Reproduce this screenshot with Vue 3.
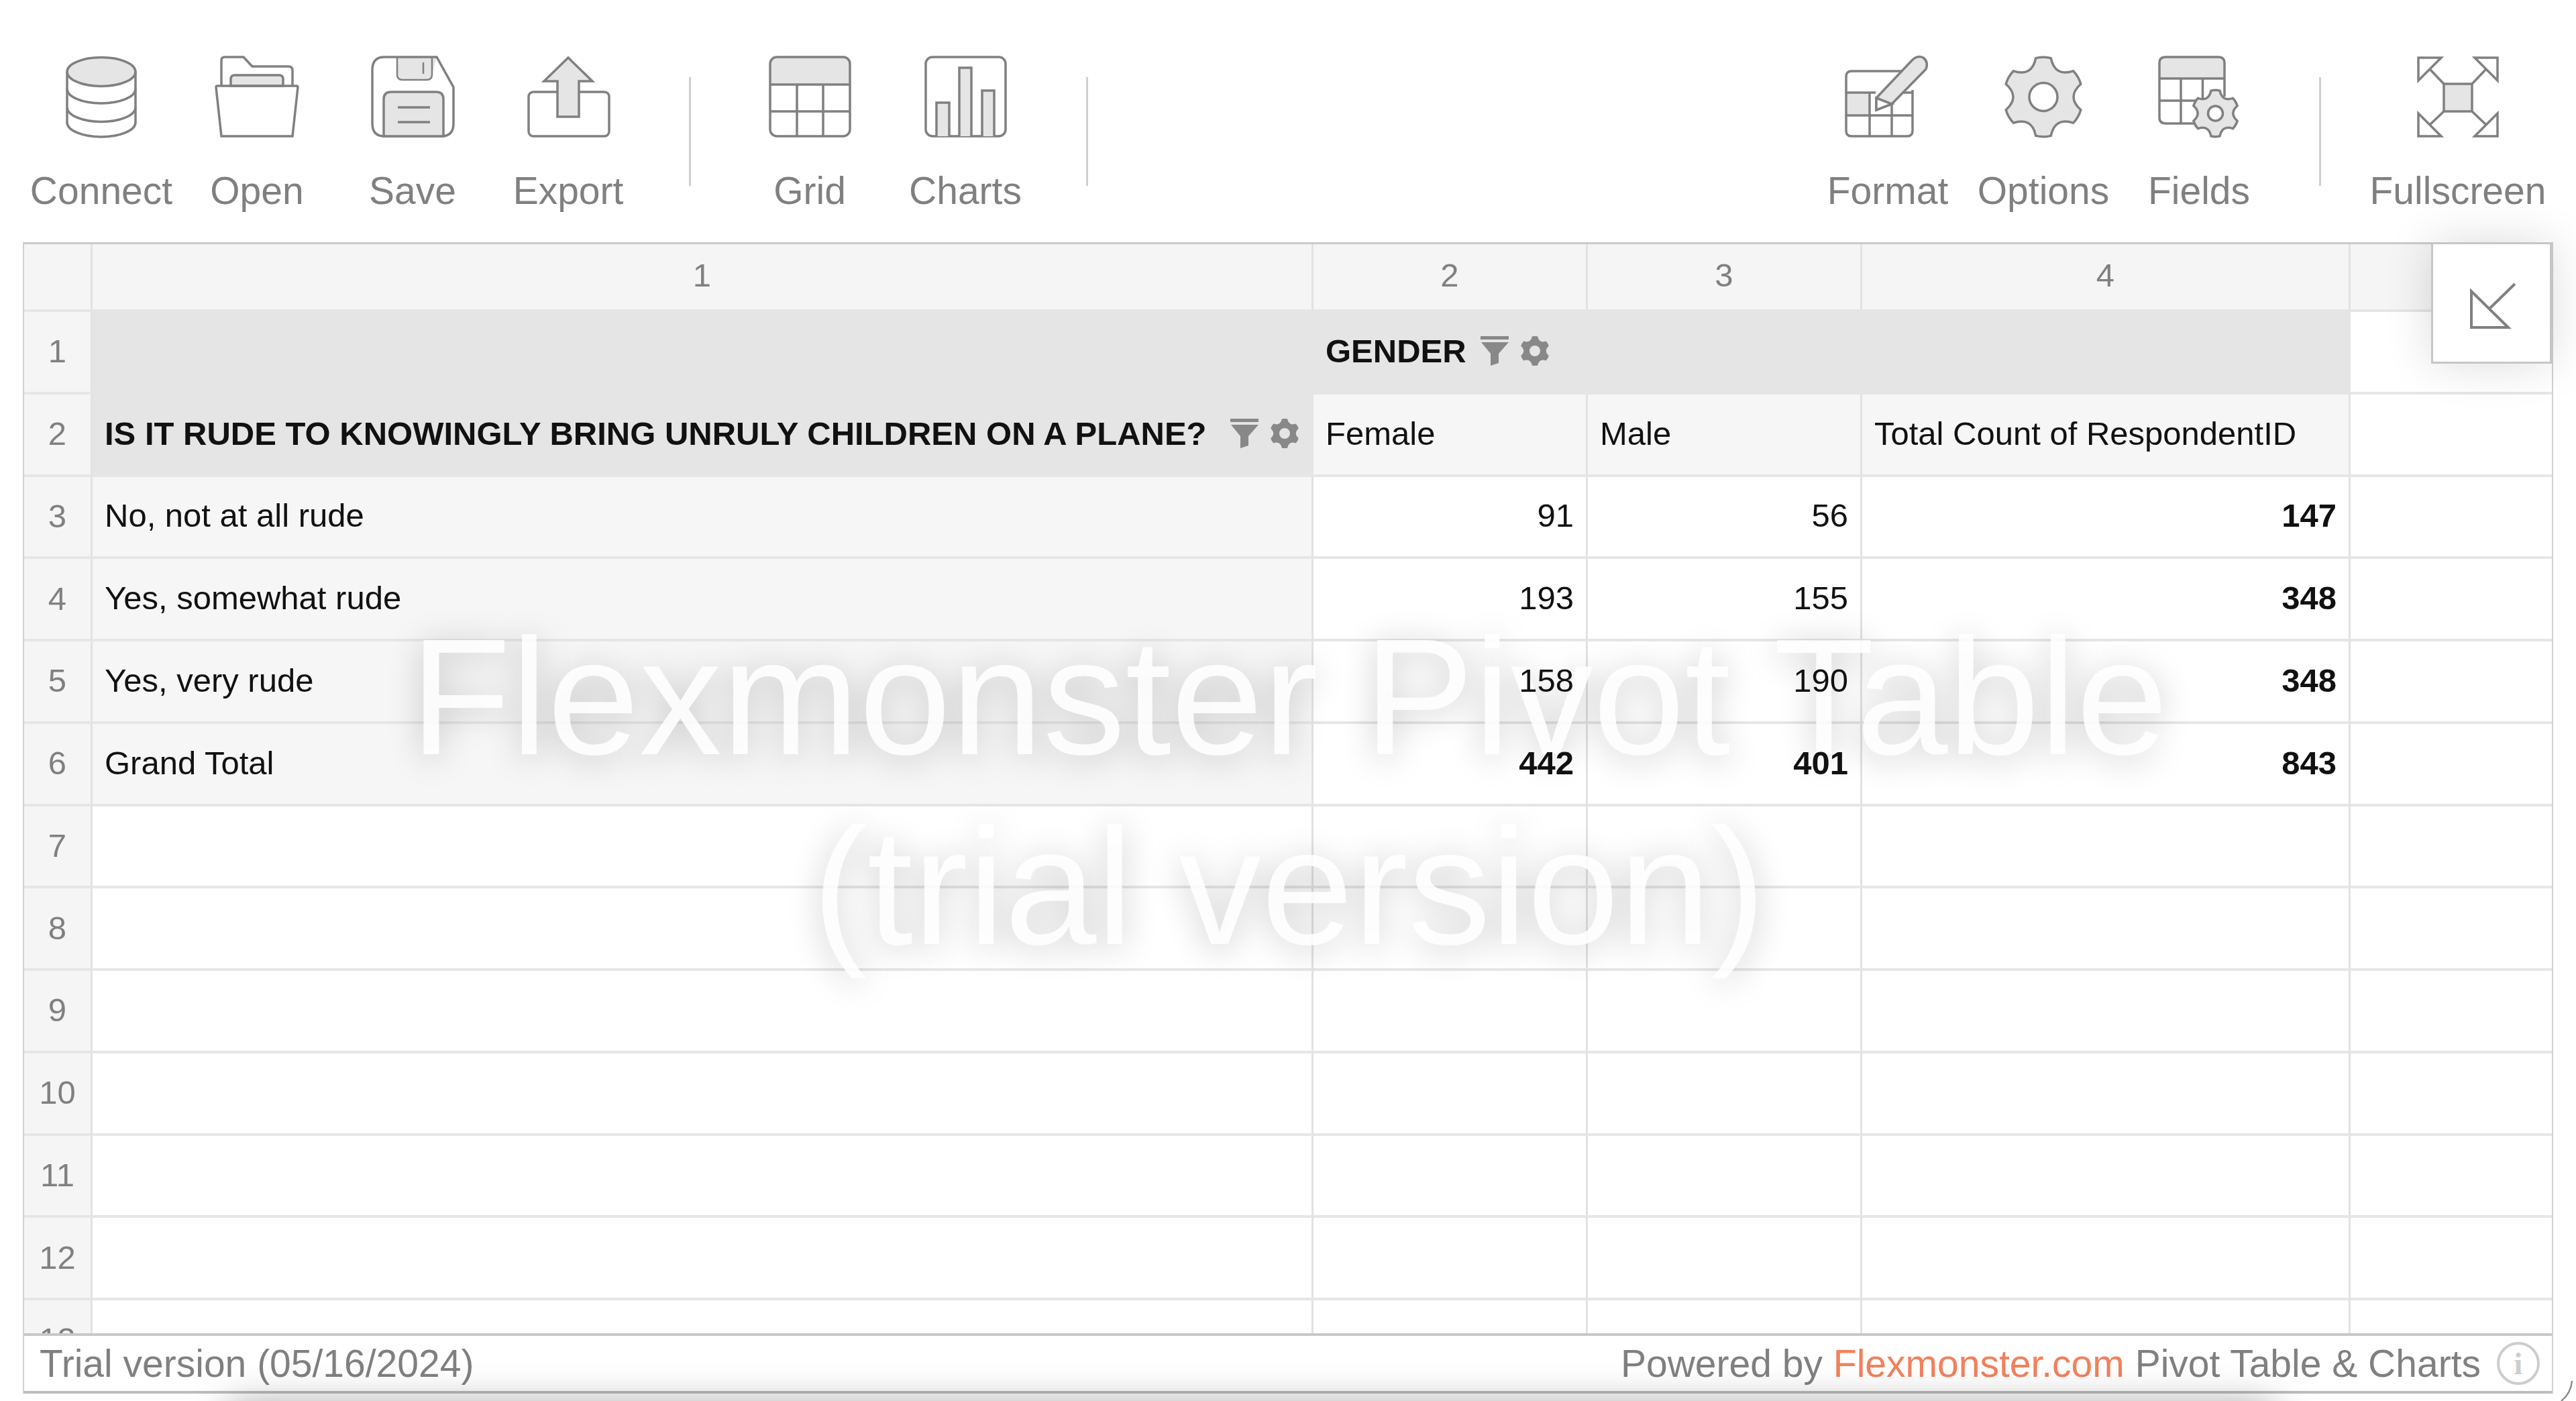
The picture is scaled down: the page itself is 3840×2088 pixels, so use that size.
<template>
  <div class="page">
    <div class="toolbar">
      <div class="tool">
        <svg class="ico" viewBox="0 0 160 121">
          <path class="ln" d="M29 23 V98.5 A51 21.5 0 0 0 131 98.5 V23" />
          <path class="ln" d="M29 48.5 A51 21.5 0 0 0 131 48.5 M29 76 A51 21.5 0 0 0 131 76" />
          <ellipse class="ln fl" cx="80" cy="23" rx="51" ry="21.5" />
        </svg>
        <span>Connect</span>
      </div>
      <div class="tool">
        <svg class="ico" viewBox="0 0 160 121">
          <path class="ln" d="M27 44 V6 Q27 1 32 1 H60 L73 15 H127 Q133 15 133 21 V44" />
          <path class="ln fl" d="M41 44 V34 Q41 28 47 28 H113 Q119 28 119 34 V44 Z" />
          <path class="ln" d="M19 46 Q19 44 21 44 H139 Q141 44 141 46 L133 119 H27 Z" />
        </svg>
        <span>Open</span>
      </div>
      <div class="tool">
        <svg class="ico" viewBox="0 0 160 121">
          <path class="fl" d="M57 2 V27 Q57 35 65 35 H101 Q109 35 109 27 L116 2 Z" />
          <path class="ln thin" d="M57 2 V27 Q57 35 65 35 H101 Q109 35 109 27 V2 M96 9 V26" />
          <path class="ln" d="M20 20 Q20 1 38 1 H116 L141 46 V100 Q141 119 123 119 H38 Q20 119 20 100 Z" />
          <path class="ln fl" d="M37 119 V64 Q37 53 48 53 H115 Q126 53 126 64 V119 Z" />
          <path class="ln" d="M58 76 H106 M58 98 H106" />
        </svg>
        <span>Save</span>
      </div>
      <div class="tool">
        <svg class="ico" viewBox="0 0 160 121">
          <rect class="ln" x="21" y="53" width="120" height="66" rx="7" />
          <path class="ln fl" d="M80 2 L116 37 H96 V90 H64 V37 H44 Z" />
        </svg>
        <span>Export</span>
      </div>
      <div class="sep"></div>
      <div class="tool">
        <svg class="ico" viewBox="0 0 160 121">
          <path class="fl" d="M21 42 V10 Q21 1 30 1 H131 Q140 1 140 10 V42 Z" />
          <rect class="ln" x="21" y="1" width="119" height="118" rx="10" />
          <path class="ln" d="M21 42 H140 M21 82 H140 M61 42 V119 M100 42 V119" />
        </svg>
        <span>Grid</span>
      </div>
      <div class="tool">
        <svg class="ico" viewBox="0 0 160 121">
          <rect class="ln" x="21" y="1" width="119" height="118" rx="10" />
          <path class="ln fl" d="M37 119 V69 H56 V119 M71 119 V17 H89 V119 M105 119 V51 H123 V119" />
        </svg>
        <span>Charts</span>
      </div>
      <div class="sep"></div>

      <div class="tool right-start">
        <svg class="ico" viewBox="0 0 160 121">
          <path class="fl" d="M18 54 H53 V88 H18 Z" />
          <path class="ln" d="M105 22 H26 Q18 22 18 30 V111 Q18 119 26 119 H109 Q117 119 117 111 V50" />
          <path class="ln" d="M18 54 H62 M98 54 H117 M18 88 H117 M53 54 V119 M86 72 V119" />
          <path class="ln fl" d="M63 62 L117 5 Q125 -2 133 2 Q141 8 137 19 L86 71 L63 80 Z" />
          <path class="ln wh" d="M63 62 L86 71 L63 80 Z" />
        </svg>
        <span>Format</span>
      </div>
      <div class="tool">
        <svg class="ico" viewBox="0 0 160 121">
          <path class="ln fl" :d="gearPath(80, 60.5, 59)" />
          <circle class="ln wh" cx="80" cy="60.5" r="21" />
        </svg>
        <span>Options</span>
      </div>
      <div class="tool">
        <svg class="ico" viewBox="0 0 160 121">
          <path class="fl" d="M21 33 V10 Q21 1 30 1 H109 Q118 1 118 10 V33 Z" />
          <path class="ln" d="M30 100 Q21 100 21 91 V10 Q21 1 30 1 H109 Q118 1 118 10 V60" />
          <path class="ln" d="M21 33 H118 M21 66 H78 M53 33 V100 M85.5 33 V66 M30 100 H78" />
          <path class="ln fl" :d="gearPath(104.5, 85, 34.5)" />
          <circle class="ln wh" cx="104.5" cy="85" r="11" />
        </svg>
        <span>Fields</span>
      </div>
      <div class="sep sep-last"></div>
      <div class="tool tool-wide">
        <svg class="ico" viewBox="0 0 160 121">
          <path class="ln" d="M21 2 H55 L21 36 Z M139 2 H105 L139 36 Z M21 119 H55 L21 85 Z M139 119 H105 L139 85 Z" />
          <path class="ln" d="M38 19 L59 41 M122 19 L101 41 M38 102 L59 82 M122 102 L101 82" />
          <rect class="ln fl" x="59" y="41" width="42" height="41" />
        </svg>
        <span>Fullscreen</span>
      </div>
    </div>

    <div class="pivot">
      <div class="grid">
        <div class="row row-head">
          <div class="cell num"><span class="t">&nbsp;</span></div>
          <div v-for="c in colHeads" :key="c" class="cell num center"><span class="t">{{ c }}</span></div>
          <div class="cell num"></div>
        </div>

        <div class="row">
          <div class="cell num center"><span class="t">1</span></div>
          <div class="cell field no-line"></div>
          <div class="cell field no-line span3 gender">
            <span class="t strong">GENDER</span>
            <span class="t tools gender-tools">
              <svg class="mini" viewBox="0 0 44 44"><path :d="filterPath" /></svg>
              <svg class="mini" viewBox="0 0 44 44"><path fill-rule="evenodd" :d="smallGear" /></svg>
            </span>
          </div>
          <div class="cell plain"></div>
        </div>

        <div class="row">
          <div class="cell num center"><span class="t">2</span></div>
          <div class="cell field">
            <span class="t strong">IS IT RUDE TO KNOWINGLY BRING UNRULY CHILDREN ON A PLANE?</span>
            <span class="t tools">
              <svg class="mini" viewBox="0 0 44 44"><path :d="filterPath" /></svg>
              <svg class="mini" viewBox="0 0 44 44"><path fill-rule="evenodd" :d="smallGear" /></svg>
            </span>
          </div>
          <div class="cell soft"><span class="t">Female</span></div>
          <div class="cell soft"><span class="t">Male</span></div>
          <div class="cell soft"><span class="t">Total Count of RespondentID</span></div>
          <div class="cell plain"></div>
        </div>

        <div v-for="(r, i) in rows" :key="r.label" class="row">
          <div class="cell num center"><span class="t">{{ i + 3 }}</span></div>
          <div class="cell soft"><span class="t">{{ r.label }}</span></div>
          <div class="cell plain end"><span class="t" :class="{ strong: r.grand }">{{ r.female }}</span></div>
          <div class="cell plain end"><span class="t" :class="{ strong: r.grand }">{{ r.male }}</span></div>
          <div class="cell plain end"><span class="t strong">{{ r.total }}</span></div>
          <div class="cell plain"></div>
        </div>

        <div v-for="n in emptyRows" :key="n" class="row">
          <div class="cell num center"><span class="t">{{ n }}</span></div>
          <div class="cell plain"></div>
          <div class="cell plain"></div>
          <div class="cell plain"></div>
          <div class="cell plain"></div>
          <div class="cell plain"></div>
        </div>

        <div class="watermark">Flexmonster Pivot Table<br />(trial version)</div>
      </div>

      <div class="minimize">
        <svg viewBox="0 0 174 175" width="174" height="175">
          <path d="M57 70 V124 H112 Z M84 96 L122 59" fill="none" stroke="#808080" stroke-width="4" />
        </svg>
      </div>

      <div class="footer">
        <span>Trial version (05/16/2024)</span>
        <span class="powered">Powered by <a class="brand">Flexmonster.com</a> Pivot Table &amp; Charts</span>
        <span class="info">i</span>
      </div>
    </div>

    <div class="bottom-shade"></div>
    <svg class="corner" viewBox="0 0 30 30" width="30" height="30">
      <path d="M24 0 C23 12 18 22 8 30" fill="none" stroke="#8a8a8a" stroke-width="2.5" />
    </svg>
  </div>
</template>

<script setup>
const colHeads = [1, 2, 3, 4]

const rows = [
  { label: 'No, not at all rude', female: 91, male: 56, total: 147 },
  { label: 'Yes, somewhat rude', female: 193, male: 155, total: 348 },
  { label: 'Yes, very rude', female: 158, male: 190, total: 348 },
  { label: 'Grand Total', female: 442, male: 401, total: 843, grand: true }
]

const emptyRows = [7, 8, 9, 10, 11, 12, 13]

const polar = (cx, cy, r, deg) => {
  const a = (deg * Math.PI) / 180
  return `${(cx + r * Math.cos(a)).toFixed(2)} ${(cy + r * Math.sin(a)).toFixed(2)}`
}

// six teeth with scooped valleys, same shape as the toolbar gears
const gearPath = (cx, cy, R) => {
  const h = 11
  let d = `M${polar(cx, cy, R, -90 - h)}`
  for (let i = 0; i < 6; i++) {
    const a = -90 + i * 60
    d += ` Q${polar(cx, cy, R * 1.03, a)} ${polar(cx, cy, R, a + h)}`
    d += ` Q${polar(cx, cy, R * 0.58, a + 30)} ${polar(cx, cy, R, a + 60 - h)}`
  }
  return d + ' Z'
}

const hole = (cx, cy, r) =>
  ` M${cx - r} ${cy} A${r} ${r} 0 1 0 ${cx + r} ${cy} A${r} ${r} 0 1 0 ${cx - r} ${cy} Z`

const smallGear = gearPath(22, 22, 22) + hole(22, 22, 8)
const filterPath = 'M0 0 H42 V5 H0 Z M1 9 H42 L27 26 V40 L15 44 V26 Z'
</script>

<style>
html,
body {
  margin: 0;
  background: #fff;
}
</style>

<style scoped>
.page {
  position: relative;
  width: 3840px;
  height: 2088px;
  overflow: hidden;
  background: #fff;
  font-family: "Liberation Sans", Arial, sans-serif;
}

.toolbar {
  display: flex;
  box-sizing: border-box;
  height: 361px;
  padding: 84px 35px 0 35px;
  color: #808080;
  font-size: 57px;
}

.tool {
  display: flex;
  flex-direction: column;
  align-items: center;
  width: 232px;
}

.tool span {
  margin-top: 47px;
  line-height: 64px;
  white-space: nowrap;
}

.tool-wide {
  width: 282px;
}

.right-start {
  margin-left: auto;
}

.ico {
  width: 160px;
  height: 121px;
  overflow: visible;
}

.ln {
  fill: none;
  stroke: #808080;
  stroke-width: 3.5;
}

.thin {
  stroke-width: 2.5;
}

.fl {
  fill: #e5e5e5;
}

.wh {
  fill: #fff;
}

.sep {
  width: 3px;
  height: 162px;
  margin: 31px 61px 0 64px;
  background: #cfcfcf;
}

.sep-last {
  margin: 31px 63px 0 63px;
}

.pivot {
  position: relative;
  box-sizing: border-box;
  width: 3772px;
  margin-left: 34px;
  border-left: 2px solid #d0d0d0;
  border-right: 2px solid #d0d0d0;
  border-top: 3px solid #cacaca;
}

.grid {
  position: relative;
  height: 1623px;
  overflow: hidden;
  color: #111;
  font-size: 49px;
}

.row {
  display: grid;
  grid-template-columns: 102px 1820px 409px 409px 728px 1fr;
  height: 122.75px;
}

.row-head {
  height: 101px;
}

.cell {
  display: flex;
  align-items: center;
  box-sizing: border-box;
  min-width: 0;
  padding: 0 18px 3px;
  border-right: 3px solid #e2e2e2;
  border-bottom: 4px solid #e6e6e6;
  white-space: nowrap;
}

.cell:last-child {
  border-right: 0;
}

.t {
  position: relative;
  z-index: 2;
}

.num {
  justify-content: center;
  padding: 0 0 2px;
  background: #f5f5f5;
  color: #808080;
}

.row-head .cell {
  padding-bottom: 6px;
}

.plain {
  background: #fff;
}

.soft {
  background: #f6f6f6;
}

.field {
  background: #e5e5e5;
  border-right-color: #e5e5e5;
  border-bottom-color: #e6e6e6;
}

.no-line {
  border-bottom: 0;
}

.span3 {
  grid-column: span 3;
}

.gender {
  padding-bottom: 6px;
}

.end {
  justify-content: flex-end;
}

.strong {
  font-weight: 700;
}

.tools {
  display: flex;
  align-items: center;
  gap: 15px;
  margin-left: 35px;
}

.gender-tools {
  margin-left: 21px;
}

.mini {
  width: 44px;
  height: 44px;
  fill: #888;
}

.watermark {
  position: absolute;
  z-index: 1;
  top: 533px;
  left: 0;
  width: 100%;
  padding-left: 3px;
  box-sizing: border-box;
  color: rgba(255, 255, 255, 0.88);
  font-size: 246px;
  line-height: 283px;
  text-align: center;
  text-shadow: 0 6px 50px rgba(0, 0, 0, 0.22);
  pointer-events: none;
}

.minimize {
  position: absolute;
  z-index: 3;
  top: -3px;
  right: 0;
  display: flex;
  box-sizing: border-box;
  width: 180px;
  height: 181px;
  border: 3px solid #c6c6c6;
  background: #fff;
  box-shadow: 0 0 70px rgba(0, 0, 0, 0.14);
}

.footer {
  display: flex;
  align-items: center;
  box-sizing: border-box;
  height: 90px;
  padding: 0 18px 0 23px;
  border-top: 4px solid #c8c8c8;
  border-bottom: 4px solid #bdbdbd;
  background: #fff;
  color: #808080;
  font-size: 57px;
}

.powered {
  margin-left: auto;
}

.brand {
  color: #f3805c;
}

.info {
  display: flex;
  align-items: center;
  justify-content: center;
  box-sizing: border-box;
  width: 64px;
  height: 64px;
  margin-left: 24px;
  border: 4px solid #cdcdcd;
  border-radius: 50%;
  color: #cdcdcd;
  font-family: "Liberation Serif", serif;
  font-size: 46px;
  font-weight: 700;
}

.bottom-shade {
  position: absolute;
  z-index: 4;
  left: 340px;
  top: 2098px;
  width: 3050px;
  height: 80px;
  box-shadow: 0 0 60px rgba(0, 0, 0, 0.42);
  pointer-events: none;
}

.corner {
  position: absolute;
  z-index: 4;
  right: 0;
  bottom: 0;
}
</style>
